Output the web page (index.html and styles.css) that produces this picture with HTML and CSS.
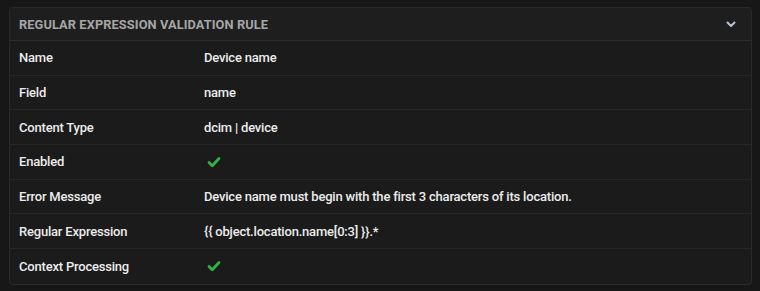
FILE: index.html
```html
<!DOCTYPE html>
<html>
<head>
<meta charset="utf-8">
<link rel="stylesheet" href="styles.css">
</head>
<body>
<div class="card">
  <div class="card-header">
    <span class="title">Regular Expression Validation Rule</span>
    <svg class="chev" width="10" height="7" viewBox="0 0 10 7"><path d="M1.5 1.5 L5 5 L8.5 1.5" fill="none" stroke="#b8c2cc" stroke-width="2" stroke-linecap="round" stroke-linejoin="round"/></svg>
  </div>
  <div class="rows">
    <div class="row"><div class="label">Name</div><div class="value">Device name</div></div>
    <div class="row"><div class="label">Field</div><div class="value">name</div></div>
    <div class="row"><div class="label">Content Type</div><div class="value">dcim | device</div></div>
    <div class="row"><div class="label">Enabled</div><div class="value"><svg class="check" width="14" height="12" viewBox="0 0 14 12"><path d="M2 6.5 L5.2 9.7 L12 2.5" fill="none" stroke="#2fb344" stroke-width="2.8" stroke-linecap="round" stroke-linejoin="round"/></svg></div></div>
    <div class="row"><div class="label">Error Message</div><div class="value">Device name must begin with the first 3 characters of its location.</div></div>
    <div class="row"><div class="label">Regular Expression</div><div class="value">{{ object.location.name[0:3] }}.*</div></div>
    <div class="row"><div class="label">Context Processing</div><div class="value"><svg class="check" width="14" height="12" viewBox="0 0 14 12"><path d="M2 6.5 L5.2 9.7 L12 2.5" fill="none" stroke="#2fb344" stroke-width="2.8" stroke-linecap="round" stroke-linejoin="round"/></svg></div></div>
  </div>
</div>
</body>
</html>
```
FILE: styles.css
```css
html, body {
  margin: 0;
  background: #171717;
}
body {
  padding: 7px 6px 0 9px;
  font-family: Roboto, "Liberation Sans", sans-serif;
  color: #ececec;
}
.card {
  width: 743px;
  box-sizing: border-box;
  border: 1px solid #2a2a2a;
  border-radius: 4px;
  background: #1b1b1b;
  overflow: hidden;
}
.card-header {
  height: 32px;
  display: flex;
  align-items: center;
  justify-content: space-between;
  padding: 0 15px 0 9px;
  background: #1e1e1e;
  border-bottom: 1px solid #2c2c2c;
}
.title {
  font-size: 12.8px;
  font-weight: 700;
  text-transform: uppercase;
  color: #a6a6a6;
  letter-spacing: 0.1px;
}
.chev { display: block; }
.row {
  display: flex;
  align-items: center;
  height: 34.7px;
  box-sizing: border-box;
  border-bottom: 1px solid #262626;
  font-size: 13px;
  font-weight: 500;
  letter-spacing: -0.2px;
}
.row:last-child { border-bottom: none; }
.label {
  width: 185px;
  padding-left: 9px;
}
.value {
  display: flex;
  align-items: center;
}
.check { display: block; margin-left: 3px; }
```
